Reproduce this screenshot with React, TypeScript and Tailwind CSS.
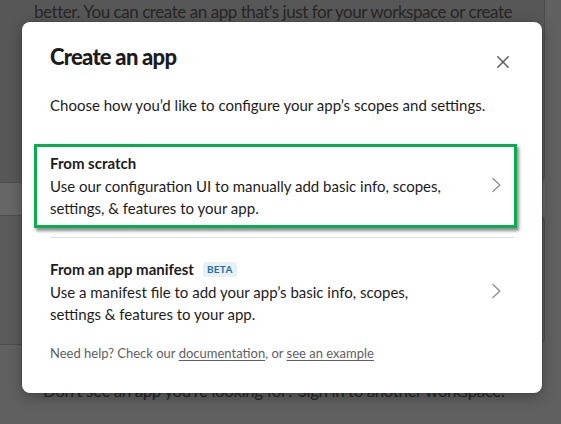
import React from "react";

function Chevron() {
  return (
    <svg width="9" height="16" viewBox="0 0 9 16" fill="none" className="shrink-0">
      <path d="M1 1.5 L7.8 8 L1 14.5" stroke="#8d8d8d" strokeWidth="1.3" strokeLinecap="round" strokeLinejoin="round" />
    </svg>
  );
}

function CloseIcon() {
  return (
    <svg width="12" height="12" viewBox="0 0 12 12" fill="none">
      <path d="M0.8 0.8 L11.2 11.2 M11.2 0.8 L0.8 11.2" stroke="#5e5d5e" strokeWidth="1.5" strokeLinecap="round" />
    </svg>
  );
}

export default function App() {
  return (
    <div className="relative h-[424px] w-[561px] overflow-hidden bg-[#606060] font-[Lato,sans-serif]">
      {/* page behind the overlay */}
      <div className="flex flex-col">
        <div className="h-[183px] w-[545px] rounded-br-lg border-r border-b border-[#4c4c4c] bg-[#575757] pl-[34px]">
          <p className="whitespace-nowrap text-[17px] leading-[24px] text-[#262626] tracking-[-0.45px]">
            better. You can create an app that's just for your workspace or create
          </p>
        </div>
        <div className="h-[32px] w-[545px] bg-[#666666]" />
        <div className="h-[130px] w-[545px] rounded-r-lg border-t border-r border-b border-[#4c4c4c] bg-[#5a5a5a]" />
        <p className="mt-[34px] whitespace-nowrap pl-[43px] text-[17px] leading-[24px] text-[#262626] tracking-[-0.45px]">
          Don't see an app you're looking for? Sign in to another workspace.
        </p>
      </div>

      {/* modal */}
      <div className="absolute left-[22px] top-[22px] w-[520px] rounded-lg bg-white px-[28px] pt-[21px] pb-[31px] text-[#1d1c1d] shadow-[0_0_0_1px_rgba(0,0,0,0.08),0_4px_14px_rgba(0,0,0,0.3)]">
        <div className="flex items-start justify-between">
          <h1 className="text-[22px] font-black leading-[28px] tracking-[-0.75px]">Create an app</h1>
          <button className="mt-[13px] mr-[5px]">
            <CloseIcon />
          </button>
        </div>

        <p className="mt-[23px] text-[15px] leading-[22px]">
          Choose how you’d like to configure your app’s scopes and settings.
        </p>

        <div className="mt-[28px] -ml-[16px] -mr-[3px] flex items-center border-[3px] border-[#07ad4f] bg-white pl-[13px] pr-[13px] pt-[4px] pb-[6px] shadow-[2px_3px_3px_rgba(0,0,0,0.45)]">
          <div className="flex-1">
            <div className="flex h-[24px] items-center text-[15px] font-bold leading-[22px]">From scratch</div>
            <div className="text-[15px] leading-[22px]">
              Use our configuration UI to manually add basic info, scopes,
              <br />
              settings, &amp; features to your app.
            </div>
          </div>
          <Chevron />
        </div>

        <div className="mt-[9px] h-px bg-[#dddddd]" />

        <div className="mt-[19px] flex items-center pr-[13px]">
          <div className="flex-1">
            <div className="flex h-[24px] items-center">
              <span className="text-[15px] font-bold leading-[22px]">From an app manifest</span>
              <span className="ml-[9px] rounded-[3px] bg-[#e8f0f5] px-[4px] text-[10px] font-bold leading-[15px] tracking-[0.3px] text-[#1d6fa8]">
                BETA
              </span>
            </div>
            <div className="text-[15px] leading-[22px]">
              Use a manifest file to add your app’s basic info, scopes,
              <br />
              settings &amp; features to your app.
            </div>
          </div>
          <Chevron />
        </div>

        <p className="mt-[19px] text-[13px] leading-[18px] text-[#616061]">
          Need help? Check our <span className="underline underline-offset-2">documentation</span>, or{" "}
          <span className="underline underline-offset-2">see an example</span>
        </p>
      </div>
    </div>
  );
}
